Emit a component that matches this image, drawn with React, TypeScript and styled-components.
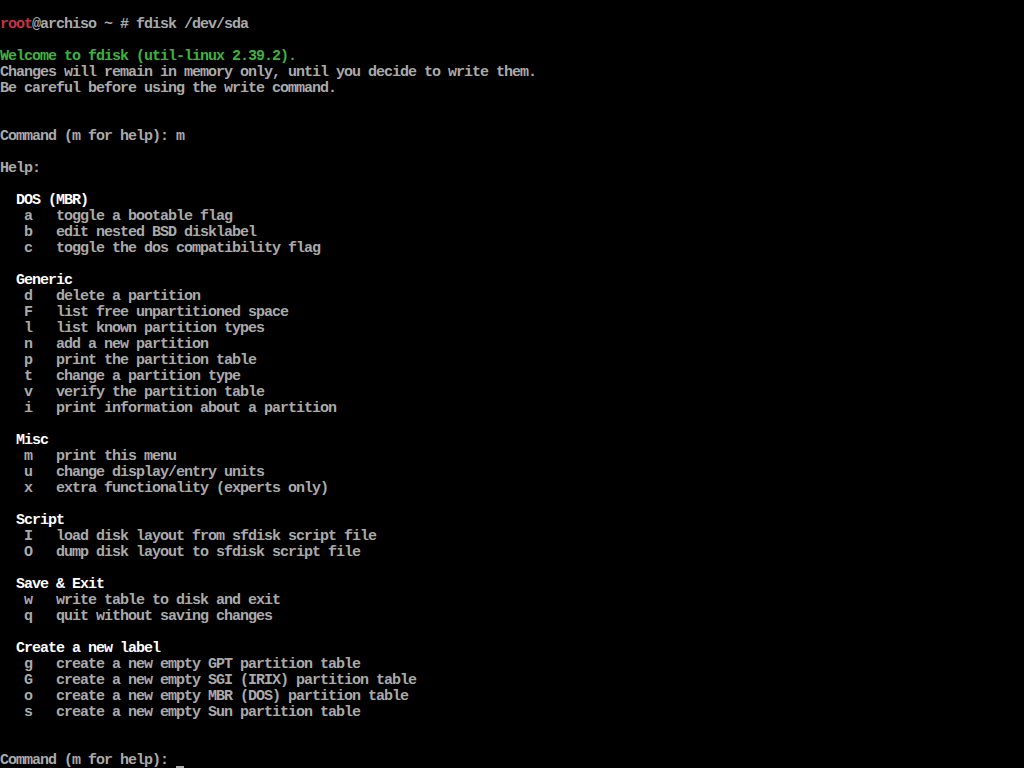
import React from "react";
import styled, { createGlobalStyle } from "styled-components";

const Global = createGlobalStyle`
  html, body { margin: 0; padding: 0; background: #000; }
  body { width: 1024px; height: 768px; overflow: hidden; }
`;

const Screen = styled.div`
  box-sizing: border-box;
  width: 1024px;
  height: 768px;
  padding-top: 1px;
  overflow: hidden;
  background: #000;
  color: #aaaaaa;
  font-family: "Liberation Mono", "DejaVu Sans Mono", monospace;
  font-size: 15px;
  letter-spacing: -1px;
  font-weight: bold;
  line-height: 16px;
  display: flex;
  flex-direction: column;
`;

const Line = styled.div`
  flex: 0 0 16px;
  height: 16px;
  white-space: pre;
`;

type Tone = "red" | "green" | "white" | "gray";
const toneColor: Record<Tone, string> = {
  red: "#c83246",
  green: "#3cb43c",
  white: "#ffffff",
  gray: "#aaaaaa",
};

const Span = styled.span<{ $tone: Tone }>`
  color: ${(p) => toneColor[p.$tone]};
`;

const Cursor = styled.span`
  display: inline-block;
  width: 8px;
  height: 16px;
  vertical-align: top;
  position: relative;
  &::after {
    content: "";
    position: absolute;
    left: 0;
    right: 0;
    bottom: 1px;
    height: 2px;
    background: #aaaaaa;
  }
`;

const sections: { title: string; items: [string, string][] }[] = [
  {
    title: "DOS (MBR)",
    items: [
      ["a", "toggle a bootable flag"],
      ["b", "edit nested BSD disklabel"],
      ["c", "toggle the dos compatibility flag"],
    ],
  },
  {
    title: "Generic",
    items: [
      ["d", "delete a partition"],
      ["F", "list free unpartitioned space"],
      ["l", "list known partition types"],
      ["n", "add a new partition"],
      ["p", "print the partition table"],
      ["t", "change a partition type"],
      ["v", "verify the partition table"],
      ["i", "print information about a partition"],
    ],
  },
  {
    title: "Misc",
    items: [
      ["m", "print this menu"],
      ["u", "change display/entry units"],
      ["x", "extra functionality (experts only)"],
    ],
  },
  {
    title: "Script",
    items: [
      ["I", "load disk layout from sfdisk script file"],
      ["O", "dump disk layout to sfdisk script file"],
    ],
  },
  {
    title: "Save & Exit",
    items: [
      ["w", "write table to disk and exit"],
      ["q", "quit without saving changes"],
    ],
  },
  {
    title: "Create a new label",
    items: [
      ["g", "create a new empty GPT partition table"],
      ["G", "create a new empty SGI (IRIX) partition table"],
      ["o", "create a new empty MBR (DOS) partition table"],
      ["s", "create a new empty Sun partition table"],
    ],
  },
];

export default function App() {
  return (
    <>
      <Global />
      <Screen>
        <Line> </Line>
        <Line>
          <Span $tone="red">root</Span>@archiso ~ # fdisk /dev/sda
        </Line>
        <Line> </Line>
        <Line>
          <Span $tone="green">Welcome to fdisk (util-linux 2.39.2).</Span>
        </Line>
        <Line>Changes will remain in memory only, until you decide to write them.</Line>
        <Line>Be careful before using the write command.</Line>
        <Line> </Line>
        <Line> </Line>
        <Line>Command (m for help): m</Line>
        <Line> </Line>
        <Line>Help:</Line>
        {sections.map((s) => (
          <React.Fragment key={s.title}>
            <Line> </Line>
            <Line>
              {"  "}
              <Span $tone="white">{s.title}</Span>
            </Line>
            {s.items.map(([k, d]) => (
              <Line key={k + d}>{`   ${k}   ${d}`}</Line>
            ))}
          </React.Fragment>
        ))}
        <Line> </Line>
        <Line> </Line>
        <Line>
          Command (m for help): <Cursor />
        </Line>
      </Screen>
    </>
  );
}
